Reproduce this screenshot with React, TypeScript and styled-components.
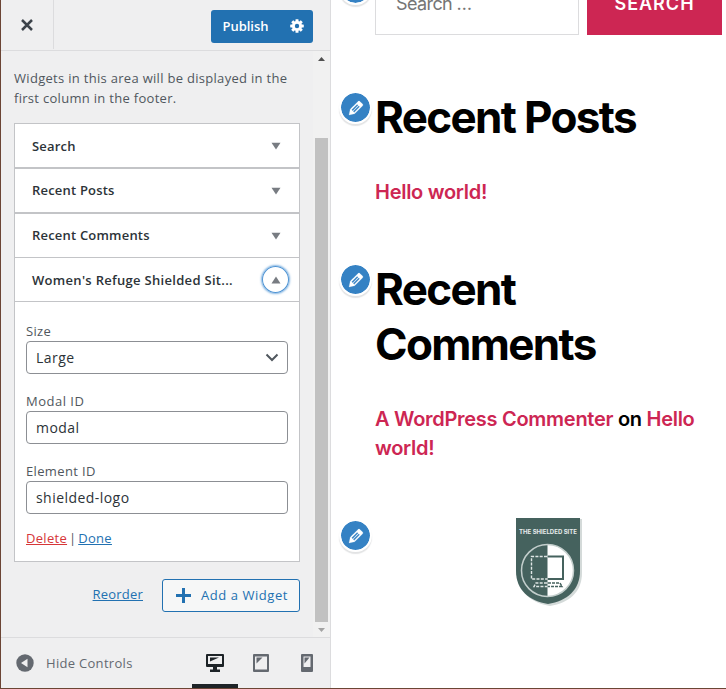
import React from 'react';
import styled, { createGlobalStyle } from 'styled-components';

const Global = createGlobalStyle`
  * { box-sizing: border-box; }
  body { margin: 0; background: #fff; overflow: hidden; }
  button, input, a { font-family: inherit; }
`;

const Page = styled.div`
  display: flex;
  width: 726px;
  height: 689px;
  border-left: 1px solid #6b4535;
  border-bottom: 1px solid #6b4535;
  overflow: hidden;
`;

const Sidebar = styled.aside`
  display: flex;
  flex-direction: column;
  width: 330px;
  flex: none;
  background: #efeff0;
  border-right: 1px solid #dcdcde;
  font-family: 'Open Sans', 'Noto Sans', sans-serif;
  font-size: 13px;
  letter-spacing: 0.3px;
  color: #50575e;
`;

const Header = styled.header`
  display: flex;
  align-items: flex-start;
  justify-content: space-between;
  height: 51px;
  flex: none;
  border-bottom: 1px solid #dcdcde;
  padding-right: 17px;
`;

const Close = styled.button`
  display: flex;
  align-items: center;
  justify-content: center;
  width: 53px;
  height: 49px;
  border: 0;
  border-right: 1px solid #dcdcde;
  background: transparent;
  padding: 0;
`;

const PublishGroup = styled.div`
  display: flex;
  margin-top: 10px;
  width: 102px;
  height: 33px;
  border-radius: 3px;
  background: #2271b1;
`;

const PublishButton = styled.button<{ $width: number }>`
  display: flex;
  align-items: center;
  justify-content: center;
  width: ${p => p.$width}px;
  border: 0;
  padding: 0 0 1px;
  background: transparent;
  color: #fff;
  font-size: 13px;
  font-weight: 600;
  letter-spacing: 0;
`;

const ScrollRegion = styled.div`
  display: flex;
  height: 586px;
  flex: none;
`;

const Content = styled.div`
  width: 312px;
  padding: 17px 13px 0 13px;
`;

const Intro = styled.p`
  margin: 0 0 15px;
  line-height: 20px;
  white-space: nowrap;
`;

const Scrollbar = styled.div`
  display: flex;
  flex-direction: column;
  align-items: center;
  width: 17px;
  padding: 6px 0 5px;
  background: #f1f1f1;
`;

const Thumb = styled.div`
  width: 13px;
  height: 484px;
  margin: 77px 0 6px;
  background: #c1c1c1;
`;

const Widget = styled.section<{ $joined?: boolean }>`
  width: 286px;
  background: #fff;
  border: 1px solid #c3c4c7;
  border-top-width: ${p => (p.$joined ? 0 : 1)}px;
`;

const WidgetHead = styled.div<{ $open?: boolean }>`
  display: flex;
  align-items: center;
  justify-content: space-between;
  height: ${p => (p.$open ? 44 : 43)}px;
  border-bottom: ${p => (p.$open ? '1px solid #c3c4c7' : '0')};
  padding: 0 10px 0 17px;
`;

const WidgetTitle = styled.h3<{ $spacing?: number; $lift?: boolean }>`
  margin: 0;
  padding-bottom: ${p => (p.$lift ? 2 : 0)}px;
  font-size: 13px;
  font-weight: 600;
  line-height: 20px;
  letter-spacing: ${p => p.$spacing ?? 0.2}px;
  color: #2c3338;
  white-space: nowrap;
`;

const Toggle = styled.span<{ $focus?: boolean }>`
  display: flex;
  align-items: center;
  justify-content: center;
  width: 27px;
  height: 27px;
  border-radius: 50%;
  box-shadow: ${p => (p.$focus ? 'inset 0 0 0 1px #4f94d4, 0 0 2px 1px rgba(79,148,212,.7)' : 'none')};
`;

const WidgetBody = styled.div`
  display: flex;
  flex-direction: column;
  height: 259px;
  padding: 19px 11px 0;
`;

const Field = styled.label<{ $spacing: number }>`
  display: block;
  height: 70px;
  line-height: 20px;
  letter-spacing: ${p => p.$spacing}px;
`;

const Control = styled.span`
  display: flex;
  align-items: center;
  justify-content: space-between;
  width: 262px;
  height: 33px;
  border: 1px solid #8c8f94;
  border-radius: 4px;
  padding: 0 8px 0 9px;
  background: #fff;
  color: #2c3338;
  font-size: 14px;
  letter-spacing: 0.45px;
`;

const Links = styled.div`
  display: flex;
  gap: 2px;
  margin-top: -3px;
  line-height: 20px;
  letter-spacing: 0;
`;

const TextLink = styled.a<{ $danger?: boolean; $spacing?: number }>`
  color: ${p => (p.$danger ? '#d63638' : '#2271b1')};
  letter-spacing: ${p => p.$spacing ?? 0.2}px;
  text-decoration: underline;
`;

const Actions = styled.div`
  display: flex;
  align-items: center;
  justify-content: flex-end;
  gap: 19px;
  width: 286px;
  margin-top: 17px;
  & > a { padding-bottom: 3px; }
`;

const AddButton = styled.button`
  display: flex;
  align-items: center;
  gap: 10px;
  width: 138px;
  height: 33px;
  padding: 0 0 0 13px;
  border: 1px solid #2271b1;
  border-radius: 3px;
  background: #f6f7f7;
  color: #2271b1;
  font-size: 13px;
  letter-spacing: 0.55px;
  white-space: nowrap;
  & > span { padding-bottom: 1px; }
`;

const Footer = styled.footer`
  display: flex;
  justify-content: space-between;
  flex: 1;
  border-top: 1px solid #dcdcde;
`;

const Hide = styled.div`
  display: flex;
  align-items: center;
  gap: 12px;
  padding-left: 15px;
  color: #646970;
`;

const Devices = styled.div`
  display: flex;
`;

const Device = styled.button<{ $active?: boolean }>`
  display: flex;
  align-items: center;
  justify-content: center;
  width: 46px;
  border: 0;
  padding: 4px 0 0;
  border-bottom: 4px solid ${p => (p.$active ? '#1d2327' : 'transparent')};
  background: transparent;
  color: ${p => (p.$active ? '#1d2327' : '#646970')};
`;

const Preview = styled.main`
  flex: 1;
  padding-left: 44px;
  background: #fff;
  font-family: Inter, sans-serif;
  color: #000;
`;

const SearchBlock = styled.section`
  position: relative;
  display: flex;
  gap: 8px;
  height: 35px;
`;

const SearchInput = styled.div`
  width: 204px;
  border: 1px solid #dcdcde;
  border-top: 0;
  padding-left: 20px;
  color: #757575;
  font-size: 18px;
  line-height: 24px;
  letter-spacing: -0.6px;
  & > span { display: block; margin-top: -8px; }
`;

const SearchButton = styled.div`
  width: 135px;
  background: #cd2653;
  color: #fff;
  font-size: 18px;
  font-weight: 600;
  line-height: 24px;
  text-align: center;
  letter-spacing: 1px;
  & > span { display: block; margin-top: -8px; }
`;

const Block = styled.section<{ $top: number }>`
  position: relative;
  margin-top: ${p => p.$top}px;
`;

const Heading = styled.h2`
  margin: 0;
  font-size: 44px;
  font-weight: 700;
  line-height: 55px;
  letter-spacing: -1.65px;
`;

const Entry = styled.p`
  margin: 33px 0 0;
  font-size: 20px;
  font-weight: 600;
  line-height: 29px;
  letter-spacing: -0.28px;
  & a { color: #cd2653; }
`;

const Badge = styled.span<{ $top: number }>`
  position: absolute;
  left: -36px;
  top: ${p => p.$top}px;
  display: flex;
  align-items: center;
  justify-content: center;
  width: 33px;
  height: 33px;
  border: 2px solid #fff;
  border-radius: 50%;
  background: #3582c4;
  background-clip: padding-box;
  box-shadow: 0 2px 1px rgba(60, 67, 74, 0.15);
`;

const LogoRow = styled.div`
  padding-left: 141px;
`;

const Shield = styled.svg`
  display: block;
`;

const EditBadge = ({ top }: { top: number }) => (
  <Badge $top={top}>
    <svg width="20" height="20" viewBox="0 0 20 20" fill="#fff" stroke="#fff" strokeWidth="0.200">
      <path d="M13.89 3.39l2.71 2.72c.46.46.42 1.24.03 1.64l-8.01 8.02-5.56 1.16 1.16-5.58s7.6-7.63 7.99-8.03c.39-.39 1.22-.39 1.68.07zm-2.73 2.79l-5.59 5.61 1.11 1.11 5.54-5.65zm-2.97 8.23l5.58-5.6-1.07-1.08-5.59 5.6z" />
    </svg>
  </Badge>
);

const Triangle = ({ up }: { up?: boolean }) => (
  <svg width="10" height="8" viewBox="0 0 10 8" fill="#787c82">
    <path d={up ? 'M5 .5l4.500 7h-9z' : 'M.5 .8h9L5 7.500z'} />
  </svg>
);

const GEAR_ANGLES = [0, 45, 90, 135];

const Gear = () => (
  <svg width="14" height="14" viewBox="-7 -7 14 14">
    <g fill="#fff">
      <circle r="5" />
      {GEAR_ANGLES.map(a => (
        <rect key={a} x="-1.500" y="-6.800" width="3" height="13.600" rx="0.400" transform={`rotate(${a})`} />
      ))}
    </g>
    <circle r="2.200" fill="#2271b1" />
  </svg>
);

const ShieldLogo = () => (
  <Shield width="67" height="89" viewBox="0 0 67 89">
    <path d="M2 1h64v54c0 19-13 30-32 33C15 85 2 74 2 55z" fill="#d4dad9" />
    <path d="M0 0h64v53c0 19-13 30-32 33C13 83 0 72 0 53z" fill="#45625e" />
    <text x="3" y="15.500" fontSize="6.200" fontWeight="700" fill="#e6ebea" textLength="58" lengthAdjust="spacingAndGlyphs">THE SHIELDED SITE</text>
    <path d="M31.500 26.500a26 26 0 0 1 0 52z" fill="#fff" />
    <circle cx="31.500" cy="52.500" r="26" fill="none" stroke="#c3cecc" strokeWidth="1.500" />
    <path d="M31 38.500H15.500v22.500H31M31 65H20l-2 3.500H31" fill="none" stroke="#dfe6e5" strokeWidth="1.400" strokeDasharray="3 1.300" />
    <path d="M32 38.500h15v22.500H32" fill="none" stroke="#45625e" strokeWidth="2" />
    <path d="M32 65h12l2 3.500H32" fill="none" stroke="#45625e" strokeWidth="1.500" strokeDasharray="3 1" />
  </Shield>
);

const CLOSED = [
  { title: 'Search', lift: false },
  { title: 'Recent Posts', lift: true },
  { title: 'Recent Comments', lift: true },
];

export default function App() {
  return (
    <Page>
      <Global />
      <Sidebar>
        <Header>
          <Close aria-label="Close">
            <svg width="12" height="12" viewBox="0 0 12 12" stroke="#3c434a" strokeWidth="2.500">
              <path d="M1 1l10 10M11 1L1 11" />
            </svg>
          </Close>
          <PublishGroup>
            <PublishButton $width={69}>Publish</PublishButton>
            <PublishButton $width={33} aria-label="Publish settings">
              <Gear />
            </PublishButton>
          </PublishGroup>
        </Header>
        <ScrollRegion>
          <Content>
            <Intro>Widgets in this area will be displayed in the<br />first column in the footer.</Intro>
            {CLOSED.map(w => (
              <Widget key={w.title}>
                <WidgetHead>
                  <WidgetTitle $lift={w.lift}>{w.title}</WidgetTitle>
                  <Toggle><Triangle /></Toggle>
                </WidgetHead>
              </Widget>
            ))}
            <Widget $joined>
              <WidgetHead $open>
                <WidgetTitle $spacing={0.3}>Women's Refuge Shielded Sit...</WidgetTitle>
                <Toggle $focus><Triangle up /></Toggle>
              </WidgetHead>
              <WidgetBody>
                <Field $spacing={0.3}>Size
                  <Control>Large
                    <svg width="14" height="9" viewBox="0 0 14 9" fill="none" stroke="#50575e" strokeWidth="2">
                      <path d="M1.500 1.500L7 7l5.500-5.500" />
                    </svg>
                  </Control>
                </Field>
                <Field $spacing={0.5}>Modal ID<Control>modal</Control></Field>
                <Field $spacing={0.35}>Element ID<Control>shielded-logo</Control></Field>
                <Links>
                  <TextLink $danger $spacing={0.3}>Delete</TextLink>
                  <span>|</span>
                  <TextLink $spacing={0.3}>Done</TextLink>
                </Links>
              </WidgetBody>
            </Widget>
            <Actions>
              <TextLink>Reorder</TextLink>
              <AddButton>
                <svg width="15" height="15" viewBox="0 0 15 15" fill="#2271b1">
                  <path d="M6 0h3v6h6v3H9v6H6V9H0V6h6z" />
                </svg>
                <span>Add a Widget</span>
              </AddButton>
            </Actions>
          </Content>
          <Scrollbar>
            <svg width="7" height="4" viewBox="0 0 7 4" fill="#505050"><path d="M3.500 0L7 4H0z" /></svg>
            <Thumb />
            <svg width="7" height="4" viewBox="0 0 7 4" fill="#a3a3a3"><path d="M0 0h7L3.500 4z" /></svg>
          </Scrollbar>
        </ScrollRegion>
        <Footer>
          <Hide>
            <svg width="18" height="18" viewBox="0 0 18 18">
              <circle cx="9" cy="9" r="8.700" fill="#646970" />
              <path d="M11.500 4.800v8.400L5 9z" fill="#efeff0" />
            </svg>
            Hide Controls
          </Hide>
          <Devices>
            <Device $active aria-label="Desktop">
              <svg width="18" height="18" viewBox="0 0 18 18" fill="currentColor">
                <path fillRule="evenodd" d="M1 0h16q1 0 1 1v11q0 1-1 1h-6v2.500h3V18H4v-2.500h3V13H1q-1 0-1-1V1q0-1 1-1zM2 2v8h14V2z" />
                <path d="M4 3.500h9L4 7.500z" />
              </svg>
            </Device>
            <Device aria-label="Tablet">
              <svg width="16" height="18" viewBox="0 0 16 18" fill="currentColor">
                <path fillRule="evenodd" d="M1 0h14q1 0 1 1v16q0 1-1 1H1q-1 0-1-1V1q0-1 1-1zM2 2.500v13h12v-13z" />
                <path d="M3.500 3.500h6l-6 6z" />
              </svg>
            </Device>
            <Device aria-label="Mobile">
              <svg width="12" height="18" viewBox="0 0 12 18" fill="currentColor">
                <path fillRule="evenodd" d="M1 0h10q1 0 1 1v16q0 1-1 1H1q-1 0-1-1V1q0-1 1-1zM2.500 2.500v10.500h7V2.500z" />
                <path d="M3.500 3.500h5l-5 6z" />
              </svg>
            </Device>
          </Devices>
        </Footer>
      </Sidebar>
      <Preview>
        <SearchBlock>
          <EditBadge top={-28} />
          <SearchInput><span>Search …</span></SearchInput>
          <SearchButton><span>SEARCH</span></SearchButton>
        </SearchBlock>
        <Block $top={55}>
          <EditBadge top={1} />
          <Heading>Recent Posts</Heading>
          <Entry><a>Hello world!</a></Entry>
        </Block>
        <Block $top={55}>
          <EditBadge top={1} />
          <Heading>Recent<br />Comments</Heading>
          <Entry><a>A WordPress Commenter</a> on <a>Hello<br />world!</a></Entry>
        </Block>
        <Block $top={55}>
          <EditBadge top={1} />
          <LogoRow><ShieldLogo /></LogoRow>
        </Block>
      </Preview>
    </Page>
  );
}
